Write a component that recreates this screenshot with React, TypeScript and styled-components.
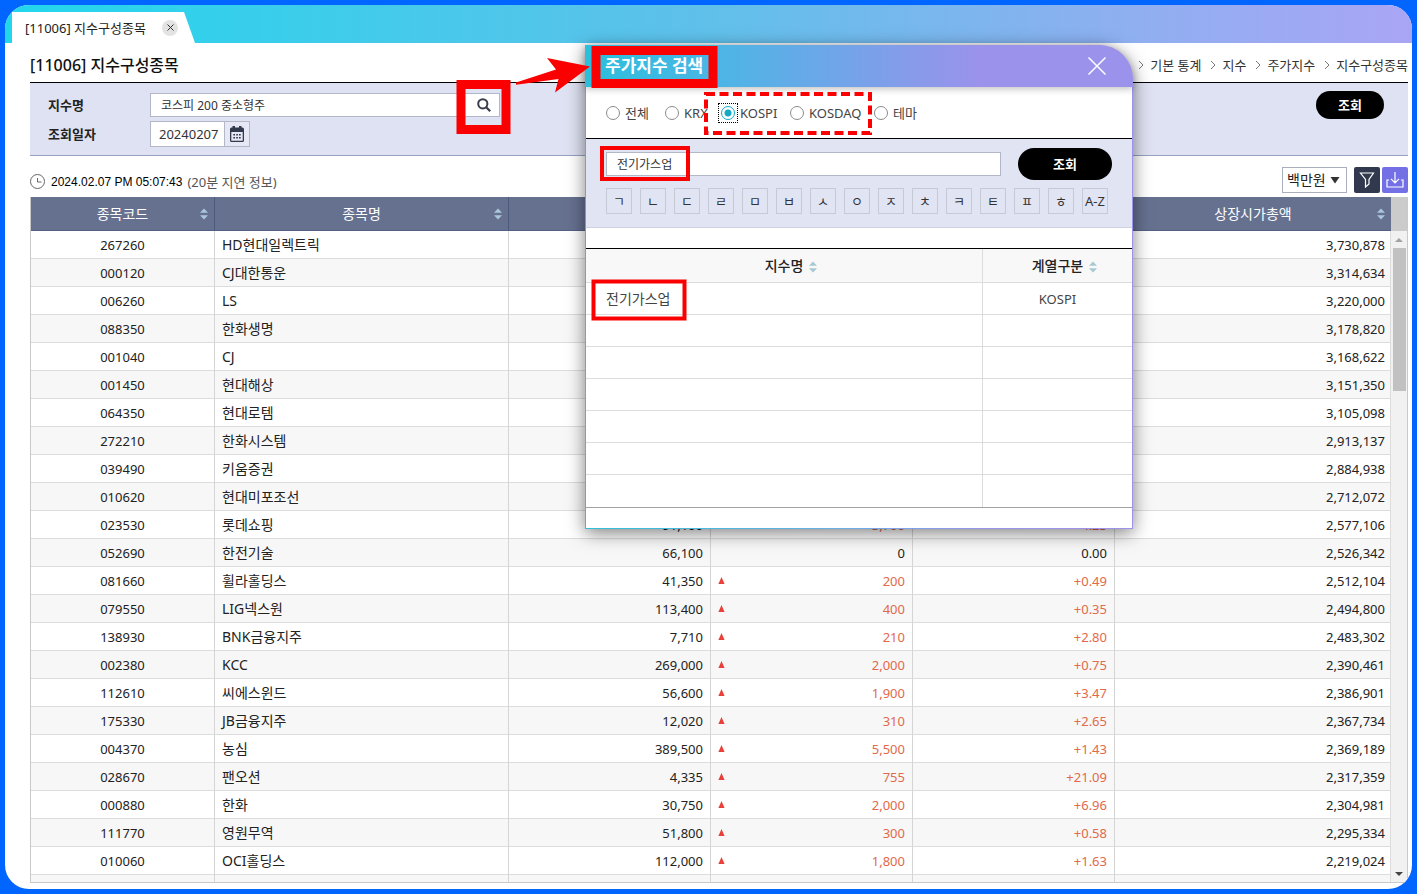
import React from "react";
import styled, { createGlobalStyle, css } from "styled-components";

const Global = createGlobalStyle`
  * { box-sizing: border-box; }
  body {
    margin: 0;
    background: #0066ff;
    color: #222;
    font-family: "Noto Sans", "Noto Sans CJK KR", sans-serif;
    font-size: 13px;
    line-height: 20px;
  }
  button, input, select { font: inherit; color: inherit; margin: 0; }
  button { padding: 0; cursor: pointer; }
`;

const Page = styled.div`
  position: relative;
  height: 100vh;
  min-height: 600px;
  padding: 5px;
  overflow: hidden;
`;

const Frame = styled.div`
  height: 100%;
  display: flex;
  flex-direction: column;
  border-radius: 24px;
  overflow: hidden;
  background: #fff;
`;

const TabBar = styled.div`
  flex: none;
  height: 38px;
  padding: 7px 0 0 7px;
  background: linear-gradient(90deg, #22d6ec, #60c0ea 50%, #8cb0f0 78%, #a9a5f5);
`;

const Tab = styled.div`
  width: 184px;
  height: 31px;
  padding: 0 18px 0 13px;
  display: flex;
  align-items: center;
  justify-content: space-between;
  background: #fff;
  color: #222;
  clip-path: polygon(0 0, 172px 0, 183px 100%, 0 100%);
`;

const TabClose = styled.button`
  width: 16px;
  height: 16px;
  display: grid;
  place-items: center;
  border: 0;
  border-radius: 50%;
  background: #e3e3e3;
`;

const Main = styled.main`
  flex: 1;
  min-height: 0;
  display: flex;
  flex-direction: column;
  padding: 0 4px 6px 25px;
`;

const TitleRow = styled.div`
  flex: none;
  height: 40px;
  padding-top: 5px;
  display: flex;
  align-items: center;
  justify-content: space-between;
  border-bottom: 1px solid #000;
`;

const Title = styled.h1`
  margin: 0;
  font-size: 16px;
  font-weight: 500;
  line-height: 24px;
  color: #111;
`;

const Crumbs = styled.nav`
  display: flex;
  align-items: center;
  gap: 6px;
  a { color: #333; text-decoration: none; }
  svg { margin-left: 3px; }
`;

const Filters = styled.form`
  flex: none;
  height: 73px;
  padding: 8px 24px 0 18px;
  display: flex;
  justify-content: space-between;
  align-items: flex-start;
  background: #dfe2f2;
  border-bottom: 1px solid #96a1c0;
`;

const Fields = styled.div`
  padding-top: 1px;
  display: grid;
  grid-template-columns: 102px 350px;
  row-gap: 3px;
`;

const FieldLabel = styled.label`
  align-self: center;
  font-weight: 600;
  color: #222;
`;

const Group = styled.div`
  display: flex;
  height: 26px;
  align-items: center;
`;

const TextInput = styled.input<{ $date?: boolean; $joined?: boolean }>`
  min-width: 0;
  height: ${p => (p.$date ? 26 : 24)}px;
  ${p => (p.$date ? css`width: 75px; padding: 0 0 0 8px;` : css`flex: 1; padding: 0 10px;`)}
  border: 1px solid #b3b8c9;
  ${p => p.$joined && css`border-right: 0;`}
  border-radius: 0;
  outline: 0;
  background: #fff;
  font-size: ${p => (p.$date ? 13 : 12)}px;
  color: #333;
`;

const FieldButton = styled.button<{ $wide?: boolean }>`
  width: ${p => (p.$wide ? 32 : 25)}px;
  height: ${p => (p.$wide ? 24 : 26)}px;
  display: grid;
  place-items: center;
  border: 1px solid #b3b8c9;
  border-left: 0;
  background: ${p => (p.$wide ? "#fff" : "#e6e8f5")};
`;

const Submit = styled.button<{ $large?: boolean }>`
  width: ${p => (p.$large ? 94 : 68)}px;
  height: ${p => (p.$large ? 32 : 28)}px;
  flex: none;
  border: 0;
  border-radius: 16px;
  background: #000;
  color: #fff;
  font-weight: 700;
`;

const InfoRow = styled.div`
  flex: none;
  height: 41px;
  padding-top: 11px;
  display: flex;
  align-items: flex-start;
  justify-content: space-between;
`;

const Stamp = styled.div`
  height: 30px;
  display: flex;
  align-items: center;
  gap: 5px;
  color: #555;
  time {
    font-family: "Liberation Sans", sans-serif;
    font-size: 12px;
    color: #000;
  }
`;

const Tools = styled.div`
  display: flex;
  height: 26px;
`;

const UnitBox = styled.div`
  position: relative;
  width: 65px;
  margin-right: 7px;
  svg { position: absolute; right: 7px; top: 9px; pointer-events: none; }
`;

const Unit = styled.select`
  width: 100%;
  height: 26px;
  padding: 0 4px;
  appearance: none;
  border: 1px solid #aaaeba;
  border-radius: 0;
  background: #fff;
  font-size: 14px;
  line-height: 20px;
`;

const Tool = styled.button<{ $color: string }>`
  width: 26px;
  height: 26px;
  margin-right: 2px;
  display: grid;
  place-items: center;
  border: 0;
  border-radius: 2px;
  background: ${p => p.$color};
  &:last-child { margin-right: 0; }
`;

const Grid = styled.div`
  flex: 1;
  min-height: 0;
  display: flex;
  align-items: stretch;
  overflow: hidden;
  border: solid #c9c9c9;
  border-width: 0 1px 1px;
`;

const GridBody = styled.div`
  flex: 1;
  min-width: 0;
  overflow: hidden;
`;

const Table = styled.table`
  width: 100%;
  table-layout: fixed;
  border-collapse: separate;
  border-spacing: 0;
`;

const Th = styled.th`
  height: 34px;
  padding: 0 6px;
  background: #667190;
  border-right: 1px solid #4c5a7c;
  border-bottom: 1px solid #536083;
  color: #fff;
  font-size: 14px;
  font-weight: 400;
  &:last-child { border-right: 0; }
`;

const ThInner = styled.div`
  display: grid;
  grid-template-columns: 8px 1fr 8px;
  align-items: center;
  text-align: center;
`;

const Tr = styled.tr`
  &:nth-child(even) { background: #f7f7f7; }
`;

const Td = styled.td<{ $align?: "center" | "left"; $up?: boolean }>`
  height: 28px;
  padding: 0 7px;
  border-right: 1px solid #d5d5d5;
  border-bottom: 1px solid #dcdcdc;
  text-align: ${p => p.$align || "right"};
  font-size: ${p => (p.$align === "left" ? 14 : 13)}px;
  white-space: nowrap;
  color: ${p => (p.$up ? "#e2694b" : "#222")};
  &:last-child { border-right-color: #dcdcdc; padding-right: 5px; }
`;

const Delta = styled.div`
  display: flex;
  align-items: center;
  justify-content: space-between;
`;

const Scroll = styled.div`
  flex: none;
  width: 16px;
  display: flex;
  flex-direction: column;
  align-items: center;
  background: #f1f1f1;
`;
const ScrollCap = styled.div`
  width: 100%;
  height: 34px;
  background: #cbcbcb;
`;
const ScrollArrow = styled.div`
  height: 17px;
  display: grid;
  place-items: center;
`;
const Thumb = styled.div`
  width: 13px;
  height: 143px;
  margin-bottom: auto;
  background: #c1c1c1;
`;

const Dialog = styled.section`
  position: absolute;
  left: 585px;
  top: 45px;
  width: 548px;
  height: 484px;
  padding: 0 1px 1px;
  display: flex;
  flex-direction: column;
  border-radius: 0 34px 0 0;
  background: linear-gradient(90deg, #30c0d8, #68aee6 45%, #9b92ec 75%, #9d93ea);
  box-shadow: 0 4px 18px rgba(0, 0, 0, 0.5);
`;

const DialogHead = styled.header`
  position: relative;
  flex: none;
  height: 42px;
  margin: 0 -1px;
  padding: 0 26px 0 20px;
  display: flex;
  align-items: center;
  justify-content: space-between;
  border-radius: 0 34px 0 0;
  background: linear-gradient(90deg, #2bbfdc, #4fb4e6 26%, #9b92ec 72%, #9b92ec);
  box-shadow: 0 2px 7px rgba(0, 0, 0, 0.25);
`;

const DialogTitle = styled.h2`
  margin: 0;
  font-size: 17px;
  font-weight: 700;
  line-height: 24px;
  color: #fff;
`;

const CloseButton = styled.button`
  width: 20px;
  height: 20px;
  border: 0;
  background: none;
`;

const Radios = styled.div`
  flex: none;
  height: 52px;
  padding: 0 20px;
  display: grid;
  grid-template-columns: 59px 56px 69px 84px auto;
  align-items: center;
  background: #fff;
  border-bottom: 1px solid #000;
`;

const RadioLabel = styled.label`
  display: flex;
  align-items: center;
  gap: 5px;
  color: #444;
`;

const Radio = styled.input`
  appearance: none;
  flex: none;
  width: 14px;
  height: 14px;
  margin: 0;
  border: 1px solid #8b8b8b;
  border-radius: 50%;
  outline: 0;
  background: #fff;
  &:checked {
    border-color: #16a9c5;
    background: radial-gradient(circle, #16a9c5 3px, #fff 4px);
  }
`;

/* The dotted focus frame has to stay square around the round control. */
const RadioFocus = styled.span<{ $on: boolean }>`
  display: grid;
  place-items: center;
  width: 20px;
  height: 20px;
  margin: 0 -3px;
  border: 1px dotted ${p => (p.$on ? "#000" : "transparent")};
`;

const DialogSearch = styled.div`
  flex: none;
  height: 89px;
  padding: 9px 20px 0;
  background: #e1e4f3;
  border-bottom: 1px solid #cfd2e0;
`;

const SearchLine = styled.div`
  display: flex;
  align-items: center;
  gap: 17px;
`;

const Initials = styled.div`
  margin-top: 8px;
  display: flex;
  gap: 8px;
`;

const Initial = styled.button`
  width: 26px;
  height: 26px;
  flex: none;
  border: 1px solid #c6c9d6;
  background: transparent;
  font-size: 13px;
  color: #333;
`;

const Results = styled.div`
  flex: 1;
  padding-top: 20px;
  background: #fff;
`;

const ResultTable = styled.table`
  width: 100%;
  table-layout: fixed;
  border-collapse: separate;
  border-spacing: 0;
  border-top: 1px solid #000;
  border-bottom: 1px solid #a2a2a2;
  th, td {
    height: 32px;
    padding: 0 20px;
    border-right: 1px solid #dcdcdc;
    border-bottom: 1px solid #dcdcdc;
    text-align: center;
    font-weight: 400;
    color: #444;
  }
  th {
    height: 34px;
    background: #f8f8f8;
    font-weight: 500;
    font-size: 14px;
    color: #222;
  }
  th svg { margin: 0 -14px 0 6px; vertical-align: -2px; }
  td:first-child { text-align: left; font-size: 14px; }
  th:last-child, td:last-child { border-right: 0; }
  tr:last-child td { border-bottom: 0; }
`;

const Marks = styled.svg`
  position: absolute;
  left: 0;
  top: 0;
  pointer-events: none;
`;

const SortIcon = ({ color }: { color: string }) => (
  <svg width="8" height="12" viewBox="0 0 8 12" fill={color} aria-hidden="true">
    <path d="M4 0.5 8 4.8H0zM4 11.5 0 7.2h8z" />
  </svg>
);

const Sep = () => (
  <svg width="6" height="10" viewBox="0 0 6 10" fill="none" stroke="#777" aria-hidden="true">
    <path d="M1 1l4 4-4 4" />
  </svg>
);

type Row = [string, string, string, string, string, string];
const rows: Row[] = [
  ["267260", "HD현대일렉트릭", "", "", "", "3,730,878"],
  ["000120", "CJ대한통운", "", "", "", "3,314,634"],
  ["006260", "LS", "", "", "", "3,220,000"],
  ["088350", "한화생명", "", "", "", "3,178,820"],
  ["001040", "CJ", "", "", "", "3,168,622"],
  ["001450", "현대해상", "", "", "", "3,151,350"],
  ["064350", "현대로템", "", "", "", "3,105,098"],
  ["272210", "한화시스템", "", "", "", "2,913,137"],
  ["039490", "키움증권", "", "", "", "2,884,938"],
  ["010620", "현대미포조선", "", "", "", "2,712,072"],
  ["023530", "롯데쇼핑", "91,100", "3,700", "+4.23", "2,577,106"],
  ["052690", "한전기술", "66,100", "0", "0.00", "2,526,342"],
  ["081660", "휠라홀딩스", "41,350", "200", "+0.49", "2,512,104"],
  ["079550", "LIG넥스원", "113,400", "400", "+0.35", "2,494,800"],
  ["138930", "BNK금융지주", "7,710", "210", "+2.80", "2,483,302"],
  ["002380", "KCC", "269,000", "2,000", "+0.75", "2,390,461"],
  ["112610", "씨에스윈드", "56,600", "1,900", "+3.47", "2,386,901"],
  ["175330", "JB금융지주", "12,020", "310", "+2.65", "2,367,734"],
  ["004370", "농심", "389,500", "5,500", "+1.43", "2,369,189"],
  ["028670", "팬오션", "4,335", "755", "+21.09", "2,317,359"],
  ["000880", "한화", "30,750", "2,000", "+6.96", "2,304,981"],
  ["111770", "영원무역", "51,800", "300", "+0.58", "2,295,334"],
  ["010060", "OCI홀딩스", "112,000", "1,800", "+1.63", "2,219,024"],
  ["", "", "", "", "", ""],
];

const headers = ["종목코드", "종목명", "", "", "", "상장시가총액"];
const markets = ["전체", "KRX", "KOSPI", "KOSDAQ", "테마"];
const initials = ["ㄱ", "ㄴ", "ㄷ", "ㄹ", "ㅁ", "ㅂ", "ㅅ", "ㅇ", "ㅈ", "ㅊ", "ㅋ", "ㅌ", "ㅍ", "ㅎ", "A-Z"];

const StockGrid = () => (
  <Grid>
    <GridBody>
      <Table>
        <colgroup>
          <col style={{ width: 184 }} />
          <col style={{ width: 294 }} />
          <col style={{ width: 202 }} />
          <col style={{ width: 202 }} />
          <col style={{ width: 202 }} />
          <col />
        </colgroup>
        <thead>
          <tr>
            {headers.map((h, i) => (
              <Th key={i} scope="col">
                <ThInner>
                  <span />
                  <span>{h}</span>
                  <SortIcon color="#a9c6dc" />
                </ThInner>
              </Th>
            ))}
          </tr>
        </thead>
        <tbody>
          {rows.map(([code, name, price, diff, rate, cap], i) => {
            const up = rate.startsWith("+");
            return (
              <Tr key={i}>
                <Td $align="center">{code}</Td>
                <Td $align="left">{name}</Td>
                <Td>{price}</Td>
                <Td $up={up}>
                  <Delta>
                    <svg width="7" height="7" viewBox="0 0 7 7" fill={up ? "#e8403a" : "none"} aria-hidden="true">
                      <path d="M3.5 0 6.6 7H.4z" />
                    </svg>
                    <span>{diff}</span>
                  </Delta>
                </Td>
                <Td $up={up}>{rate}</Td>
                <Td>{cap}</Td>
              </Tr>
            );
          })}
        </tbody>
      </Table>
    </GridBody>
    <Scroll>
      <ScrollCap />
      <ScrollArrow>
        <svg width="8" height="4" fill="#a3a3a3" aria-hidden="true"><path d="M0 4 4 0l4 4z" /></svg>
      </ScrollArrow>
      <Thumb />
      <ScrollArrow>
        <svg width="8" height="4" fill="#444" aria-hidden="true"><path d="M0 0h8L4 4z" /></svg>
      </ScrollArrow>
    </Scroll>
  </Grid>
);

const IndexDialog = () => (
  <Dialog role="dialog" aria-labelledby="dialog-title">
    <DialogHead>
      <DialogTitle id="dialog-title">주가지수 검색</DialogTitle>
      <CloseButton type="button" aria-label="닫기">
        <svg width="20" height="20" stroke="#fff" strokeWidth="1.5" fill="none">
          <path d="M1.5 1.5l17 17M18.5 1.5l-17 17" />
        </svg>
      </CloseButton>
    </DialogHead>
    <Radios>
      {markets.map(m => (
        <RadioLabel key={m}>
          <RadioFocus $on={m === "KOSPI"}>
            <Radio type="radio" name="market" defaultChecked={m === "KOSPI"} />
          </RadioFocus>
          <span>{m}</span>
        </RadioLabel>
      ))}
    </Radios>
    <DialogSearch>
      <SearchLine>
        <TextInput aria-label="검색어" defaultValue="전기가스업" />
        <Submit $large type="button">조회</Submit>
      </SearchLine>
      <Initials>
        {initials.map(c => (
          <Initial key={c} type="button">{c}</Initial>
        ))}
      </Initials>
    </DialogSearch>
    <Results>
      <ResultTable>
        <colgroup>
          <col />
          <col style={{ width: 149 }} />
        </colgroup>
        <thead>
          <tr>
            <th scope="col">지수명<SortIcon color="#a8c8d2" /></th>
            <th scope="col">계열구분<SortIcon color="#a8c8d2" /></th>
          </tr>
        </thead>
        <tbody>
          <tr><td>전기가스업</td><td>KOSPI</td></tr>
          {[1, 2, 3, 4, 5, 6].map(n => (
            <tr key={n}><td /><td /></tr>
          ))}
        </tbody>
      </ResultTable>
    </Results>
  </Dialog>
);

const Highlights = () => (
  <Marks width="900" height="340" fill="none" stroke="#fb0000" aria-hidden="true">
    <rect x="461" y="84.5" width="45" height="45" strokeWidth="9" />
    <rect x="596" y="50.5" width="117" height="33" strokeWidth="9" />
    <rect x="706" y="94" width="164" height="39" strokeWidth="4" strokeDasharray="9 4.5" />
    <rect x="602" y="148" width="86" height="31" strokeWidth="4" />
    <rect x="593.5" y="281.5" width="91" height="37" strokeWidth="4" />
    <path stroke="none" fill="#fb0000" d="M516 82.5 556 69.5 547 58 590 66.5 555 92.5 558.5 79 516 84.8z" />
  </Marks>
);

export default function App() {
  return (
    <Page>
      <Global />
      <Frame>
        <TabBar>
          <Tab>
            <span>[11006] 지수구성종목</span>
            <TabClose type="button" aria-label="탭 닫기">
              <svg width="7" height="7" stroke="#333" fill="none"><path d="M.5.5l6 6M6.5.5l-6 6" /></svg>
            </TabClose>
          </Tab>
        </TabBar>
        <Main>
          <TitleRow>
            <Title>[11006] 지수구성종목</Title>
            <Crumbs>
              {["기본 통계", "지수", "주가지수", "지수구성종목"].map(c => (
                <React.Fragment key={c}>
                  <Sep />
                  <a href="#">{c}</a>
                </React.Fragment>
              ))}
            </Crumbs>
          </TitleRow>
          <Filters>
            <Fields>
              <FieldLabel htmlFor="index">지수명</FieldLabel>
              <Group>
                <TextInput $joined id="index" defaultValue="코스피 200 중소형주" />
                <FieldButton $wide type="button" aria-label="지수 찾기">
                  <svg width="14" height="14" fill="none" stroke="#3a3d4a" strokeWidth="2">
                    <circle cx="5.8" cy="5.8" r="4.6" />
                    <path d="M9.200 9.200l4 4" strokeWidth="2.2" />
                  </svg>
                </FieldButton>
              </Group>
              <FieldLabel htmlFor="date">조회일자</FieldLabel>
              <Group>
                <TextInput $date id="date" defaultValue="20240207" />
                <FieldButton type="button" aria-label="달력">
                  <svg width="14" height="16" viewBox="0 0 14 16" fill="#333a4d">
                    <path fillRule="evenodd" d="M2.5 0h2.5v1.5h4V0h2.5v1.5h1A1.5 1.5 0 0 1 14 3v11.5a1.5 1.5 0 0 1-1.5 1.5h-11A1.5 1.5 0 0 1 0 14.5V3a1.5 1.5 0 0 1 1.5-1.5h1zM1.3 6v8.7h11.4V6z" />
                    <path d="M6.2 8h1.700v1.500H6.200zM9 8h1.700v1.500H9zM3.300 11H5v1.500H3.300zM6.200 11h1.700v1.500H6.200zM9 11h1.700v1.500H9zM3.300 8H5v1.500H3.300z" />
                  </svg>
                </FieldButton>
              </Group>
            </Fields>
            <Submit type="button">조회</Submit>
          </Filters>
          <InfoRow>
            <Stamp>
              <svg width="16" height="16" fill="none" stroke="#666" aria-hidden="true">
                <circle cx="7.5" cy="7.5" r="7" />
                <path d="M7.5 4v4h4" />
              </svg>
              <time>2024.02.07 PM 05:07:43</time>
              <span>(20분 지연 정보)</span>
            </Stamp>
            <Tools>
              <UnitBox>
                <Unit aria-label="단위" defaultValue="백만원"><option>백만원</option></Unit>
                <svg width="10" height="8" fill="#333" aria-hidden="true"><path d="M.5 1h9L5 7.500z" /></svg>
              </UnitBox>
              <Tool $color="#30394d" type="button" aria-label="필터">
                <svg width="16" height="16" fill="none" stroke="#fff" strokeWidth="1.2">
                  <path d="M1.500 1h13L10 7.500v4.500L6.500 15V7.500z" />
                </svg>
              </Tool>
              <Tool $color="#7370e6" type="button" aria-label="내려받기">
                <svg width="18" height="18" fill="none" stroke="#fff" strokeWidth="1.2">
                  <path d="M9 1v10.500M5 7.800 9 11.800l4-4M3 9H1v7h16V9h-2" />
                </svg>
              </Tool>
            </Tools>
          </InfoRow>
          <StockGrid />
        </Main>
      </Frame>
      <IndexDialog />
      <Highlights />
    </Page>
  );
}
